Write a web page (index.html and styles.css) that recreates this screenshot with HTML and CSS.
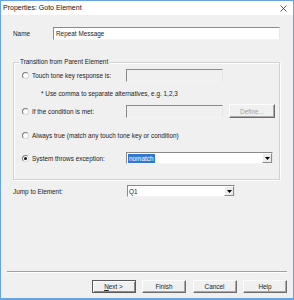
FILE: index.html
```html
<!DOCTYPE html>
<html>
<head>
<meta charset="utf-8">
<link rel="stylesheet" href="styles.css">
</head>
<body>
<div class="window">
  <div class="titlebar">
    <span class="title">Properties: Goto Element</span>
    <svg class="close" width="7" height="7" viewBox="0 0 7 7"><path d="M0.5 0.5L6.5 6.5M6.5 0.5L0.5 6.5" stroke="#333" stroke-width="0.8" fill="none"/></svg>
  </div>
  <div class="body">
    <div class="main">
      <div class="name-row">
        <span class="name-label">Name</span>
        <div class="textbox">Repeat Message</div>
      </div>
      <div class="group">
        <div class="group-title">Transition from Parent Element</div>
        <div class="opt-row r1">
          <span class="radio"></span>
          <span class="opt-label">Touch tone key response is:</span>
          <div class="textbox disabled w97"></div>
        </div>
        <div class="hint">* Use comma to separate alternatives, e.g. 1,2,3</div>
        <div class="opt-row r2">
          <span class="radio"></span>
          <span class="opt-label">If the condition is met:</span>
          <div class="textbox disabled w97"></div>
          <div class="btn define">Define...</div>
        </div>
        <div class="opt-row r3">
          <span class="radio"></span>
          <span>Always true (match any touch tone key or condition)</span>
        </div>
        <div class="opt-row r4">
          <span class="radio checked"></span>
          <span class="opt-label">System throws exception:</span>
          <div class="combo w147">
            <span class="combo-value"><span class="sel">nomatch</span></span>
            <span class="combo-btn"><svg width="5" height="3" viewBox="0 0 5 3"><path d="M0 0H5L2.5 3Z" fill="#000"/></svg></span>
          </div>
        </div>
      </div>
      <div class="jump-row">
        <span class="jump-label">Jump to Element:</span>
        <div class="combo w108">
          <span class="combo-value">Q1</span>
          <span class="combo-btn"><svg width="5" height="3" viewBox="0 0 5 3"><path d="M0 0H5L2.5 3Z" fill="#000"/></svg></span>
        </div>
      </div>
    </div>
    <div class="separator"></div>
    <div class="buttons">
      <div class="btn default"><span class="ul">N</span>ext &gt;</div>
      <div class="btn">Finish</div>
      <div class="btn">Cancel</div>
      <div class="btn">Help</div>
    </div>
  </div>
</div>
</body>
</html>
```
FILE: styles.css
```css
* { box-sizing: border-box; }
html, body { margin: 0; padding: 0; }
body {
  font-family: "Liberation Sans", Arial, sans-serif;
  font-size: 6.4px;
  color: #222;
  background: #f0f0f0;
}
.window {
  width: 294px;
  height: 300px;
  border: 1px solid #6aa4e0;
  border-bottom-width: 2px;
  display: flex;
  flex-direction: column;
  background: #f0f0f0;
}
.titlebar {
  height: 14px;
  background: #fff;
  display: flex;
  align-items: center;
  justify-content: space-between;
  padding: 0 6px 1px 2px;
  flex: none;
}
.title { font-size: 7px; color: #111; }
.close { display: block; margin-top: 1px; }
.body {
  flex: 1;
  padding: 0 6px;
  display: flex;
  flex-direction: column;
}
.main { padding: 12px 7px 0 6px; }
.name-row { display: flex; align-items: center; height: 13px; }
.name-label { width: 40px; }
.textbox {
  height: 13px;
  flex: 1;
  background: #fff;
  border: 1px solid;
  border-color: #8a8a8a #e6e6e6 #f4f4f4 #8a8a8a;
  padding-left: 2px;
  display: flex;
  align-items: center;
}
.textbox.disabled { background: #f0f0f0; }
.w97 { flex: none; width: 97px; }
.group {
  margin-top: 22px;
  border: 1px solid #d2d2d2;
  box-shadow: inset 1px 1px #fff, 1px 1px #fff;
  padding: 0 4px 15px 8px;
}
.group-title {
  margin-top: -5px;
  margin-left: -3px;
  line-height: 8px;
  height: 8px;
  background: #f0f0f0;
  width: fit-content;
  padding: 0 1px;
}
.opt-row { display: flex; align-items: center; height: 13px; }
.r1 { margin-top: 3px; }
.r2 { margin-top: 6px; height: 14px; }
.r3 { margin-top: 11px; }
.r4 { margin-top: 10px; height: 12px; }
.radio {
  flex: none;
  width: 7px;
  height: 7px;
  border-radius: 50%;
  border: 1px solid;
  border-color: #7a7a7a #d8d8d8 #d8d8d8 #7a7a7a;
  background: #fff;
  margin-right: 3px;
  display: flex;
  align-items: center;
  justify-content: center;
}
.radio.checked::after {
  content: "";
  width: 3px;
  height: 3px;
  border-radius: 50%;
  background: #111;
}
.opt-label { width: 94px; flex: none; }
.hint { margin-top: 8px; line-height: 8px; padding-left: 19px; }
.btn {
  height: 14px;
  width: 44px;
  display: flex;
  align-items: center;
  justify-content: center;
  background: #f0f0f0;
  border: 1px solid;
  border-color: #fdfdfd #6d6d6d #6d6d6d #fdfdfd;
  box-shadow: inset -1px -1px #a8a8a8;
  flex: none;
}
.define { width: 46px; margin-left: 6px; color: #a2a2a2; }
.combo {
  height: 12px;
  display: flex;
  background: #fff;
  border: 1px solid;
  border-color: #8a8a8a #e6e6e6 #f4f4f4 #8a8a8a;
  flex: none;
}
.w147 { width: 147px; }
.w108 { width: 108px; }
.combo-value {
  flex: 1;
  display: flex;
  align-items: center;
  padding-left: 1px;
}
.sel {
  background: #3277d1;
  color: #fff;
  height: 9px;
  display: flex;
  align-items: center;
  padding: 0 1px;
}
.combo-btn {
  width: 10px;
  flex: none;
  background: #ececec;
  border: 1px solid;
  border-color: #fdfdfd #8a8a8a #8a8a8a #fdfdfd;
  display: flex;
  align-items: center;
  justify-content: center;
}
.combo-btn svg { display: block; }
.jump-row { display: flex; align-items: center; margin-top: 5px; height: 12px; }
.jump-label { width: 114px; flex: none; }
.separator {
  margin-top: 74px;
  height: 2px;
  border-top: 1px solid #a0a0a0;
  border-bottom: 1px solid #fff;
}
.buttons {
  margin-top: 7px;
  display: flex;
  justify-content: flex-end;
  gap: 6.5px;
}
.buttons .btn { height: 13px; }
.btn.default {
  border-color: #5a5a5a;
  box-shadow: inset 1px 1px #fdfdfd, inset -1px -1px #8a8a8a;
}
.ul { text-decoration: underline; }
```
